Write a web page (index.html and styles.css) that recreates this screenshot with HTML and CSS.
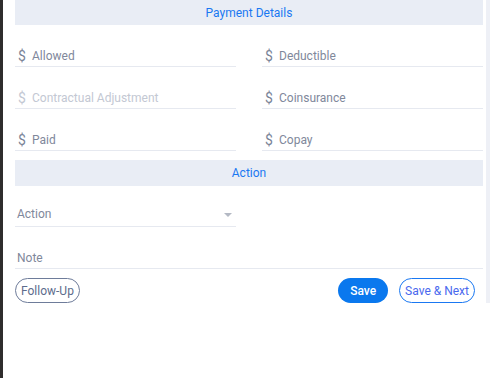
FILE: index.html
```html
<!DOCTYPE html>
<html lang="en">
<head>
  <meta charset="UTF-8">
  <meta name="viewport" content="width=device-width, initial-scale=1.0">
  <title>Payment Details</title>
  <link rel="stylesheet" href="styles.css">
</head>
<body>
  <div class="frame">
    <div class="edge"></div>
    <div class="panel">
      <form class="form">
        <div class="section-title">Payment Details</div>
        <div class="grid">
          <label class="field"><span class="cur">$</span><span class="label">Allowed</span></label>
          <label class="field"><span class="cur">$</span><span class="label">Deductible</span></label>
          <label class="field disabled"><span class="cur">$</span><span class="label">Contractual Adjustment</span></label>
          <label class="field"><span class="cur">$</span><span class="label">Coinsurance</span></label>
          <label class="field"><span class="cur">$</span><span class="label">Paid</span></label>
          <label class="field"><span class="cur">$</span><span class="label">Copay</span></label>
        </div>

        <div class="section-title spaced">Action</div>
        <div class="grid">
          <label class="field select"><span class="label plain">Action</span><span class="caret"></span></label>
        </div>
        <label class="field note"><span class="label plain">Note</span></label>

        <div class="actions">
          <button type="button" class="btn outline">Follow-Up</button>
          <div class="right">
            <button type="button" class="btn primary">Save</button>
            <button type="button" class="btn outline blue">Save &amp; Next</button>
          </div>
        </div>
      </form>
      <div class="scroll"></div>
    </div>
  </div>
</body>
</html>
```

FILE: styles.css
```css
body {
  margin: 0;
  font-family: Roboto, "Liberation Sans", Arial, sans-serif;
  font-size: 12px;
  background: #fff;
}
.frame {
  display: flex;
  min-height: 378px;
}
.edge {
  width: 3px;
  background-color: #2f2d2d;
  flex-shrink: 0;
}
.panel {
  display: flex;
  align-items: flex-start;
  padding-left: 12px;
}
.form {
  width: 468px;
}
.scroll {
  width: 4px;
  margin-left: 3px;
  height: 303px;
  background-color: #eef0f6;
}
.section-title {
  height: 25px;
  line-height: 26px;
  background-color: #e9edf5;
  color: #1a78f2;
  text-align: center;
}
.section-title.spaced {
  margin-top: 9px;
  height: 26px;
  line-height: 26px;
}
.grid {
  display: grid;
  grid-template-columns: 221px 221px;
  column-gap: 26px;
}
.field {
  display: flex;
  align-items: flex-end;
  height: 42px;
  padding-bottom: 2px;
  box-sizing: border-box;
  border-bottom: 1px solid #e6e9f0;
  line-height: 16px;
  color: #7f889b;
}
.cur {
  font-size: 14px;
  width: 11px;
  margin-left: 3px;
  margin-right: 3px;
  color: #7a8497;
}
.disabled .label,
.disabled .cur {
  color: #c3c8d3;
}
.label.plain {
  margin-left: 2px;
}
.field.select {
  height: 41px;
  padding-bottom: 4px;
  justify-content: space-between;
}
.caret {
  width: 0;
  height: 0;
  border-left: 4px solid transparent;
  border-right: 4px solid transparent;
  border-top: 4px solid #b4b9c4;
  margin-right: 4px;
  margin-bottom: 5px;
}
.actions {
  display: flex;
  justify-content: space-between;
  margin-top: 9px;
}
.right {
  display: flex;
  gap: 11px;
  margin-right: 8px;
}
.btn {
  font-family: inherit;
  font-size: 12px;
  height: 25px;
  padding: 0 5px;
  border-radius: 13px;
  cursor: pointer;
  background: #fff;
}
.btn.outline {
  border: 1px solid #6e7c9a;
  color: #5d6c8c;
}
.btn.outline.blue {
  border-color: #1a78f2;
  color: #4a68ee;
}
.btn.primary {
  border: none;
  background-color: #0a78ee;
  color: #fff;
  font-weight: 500;
  width: 50px;
  margin-left: 1px;
}
```
